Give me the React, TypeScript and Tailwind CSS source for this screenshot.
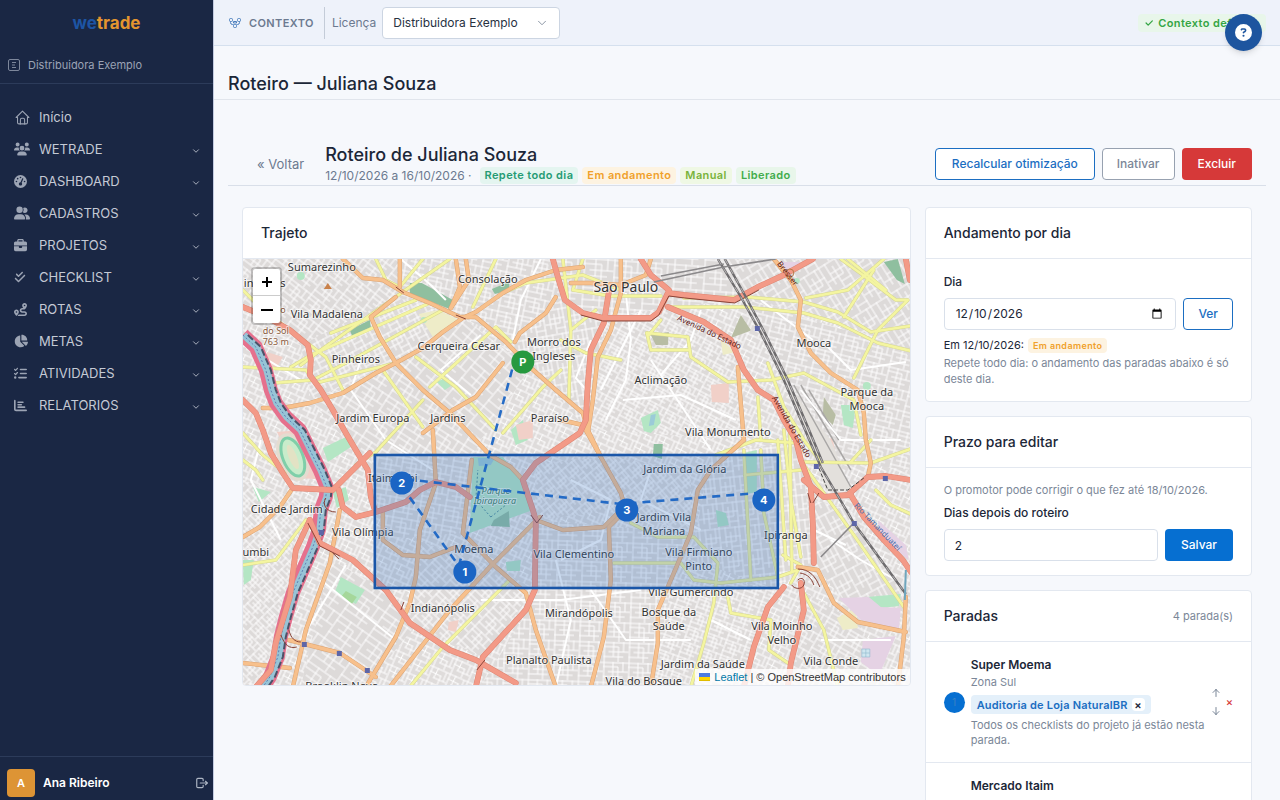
import type { ReactNode } from 'react';
import {
  FaBriefcase,
  FaChartBar,
  FaChartPie,
  FaCheckDouble,
  FaCircleQuestion,
  FaGaugeHigh,
  FaListCheck,
  FaRoute,
  FaUserGroup,
  FaUsers,
} from 'react-icons/fa6';
import { TbArrowDown, TbArrowUp, TbCheck, TbChevronDown, TbHome, TbLogout } from 'react-icons/tb';

const menu = [
  { label: 'WETRADE', icon: <FaUsers size={16} /> },
  { label: 'DASHBOARD', icon: <FaGaugeHigh size={13} /> },
  { label: 'CADASTROS', icon: <FaUserGroup size={16} /> },
  { label: 'PROJETOS', icon: <FaBriefcase size={13} /> },
  { label: 'CHECKLIST', icon: <FaCheckDouble size={12} /> },
  { label: 'ROTAS', icon: <FaRoute size={13} /> },
  { label: 'METAS', icon: <FaChartPie size={14} /> },
  { label: 'ATIVIDADES', icon: <FaListCheck size={13} /> },
  { label: 'RELATORIOS', icon: <FaChartBar size={13} /> },
];

function Sidebar() {
  return (
    <aside className="sticky top-0 flex h-screen w-[213px] shrink-0 flex-col bg-[#1a2744] text-[#c5cad5]">
      <div className="flex h-[46px] items-center justify-center text-[17px] leading-6 font-bold">
        <span className="text-[#1d55a4]">we</span>
        <span className="text-[#e4952f]">trade</span>
      </div>
      <div className="flex h-[38px] items-center gap-2 border-b border-[#2c3b5a] pl-2 text-[11px] text-[#9aa3b5]">
        <svg width="12" height="12" viewBox="0 0 12 12" fill="none" stroke="#7d879b" aria-hidden="true">
          <rect x="0.5" y="0.5" width="11" height="11" rx="1.5" />
          <path d="M4 3.5h4M4 6h3M4 8.5h4" />
        </svg>
        <span>Distribuidora Exemplo</span>
      </div>
      <nav className="flex flex-1 flex-col pt-[17px] text-[13px]">
        <a href="#inicio" className="flex h-8 items-center gap-2 pl-[14px]">
          <span className="flex w-[17px] justify-center text-[#9ca4b4]">
            <TbHome size={17} strokeWidth={1.5} />
          </span>
          Início
        </a>
        {menu.map((m) => (
          <button key={m.label} type="button" className="flex h-8 items-center gap-2 pr-3 pl-[14px] text-left">
            <span className="flex w-[17px] text-[#9ca4b4]">{m.icon}</span>
            <span className="flex-1">{m.label}</span>
            <TbChevronDown size={10} strokeWidth={2} className="mt-[3px]" />
          </button>
        ))}
      </nav>
      <div className="flex h-[44px] items-center gap-2 border-t border-[#2c3b5a] pt-2 pr-1 pl-[7px]">
        <span className="flex size-7 items-center justify-center rounded bg-[#dd9435] text-[11px] font-semibold text-white">A</span>
        <span className="flex-1 text-xs font-semibold text-white">Ana Ribeiro</span>
        <button type="button" aria-label="Sair" className="text-[#aeb6c4]">
          <TbLogout size={14} />
        </button>
      </div>
    </aside>
  );
}

/* ---------- Map ---------- */

const districts = [
  { angle: 38, gap: 5, points: '242,259 400,259 395,300 300,345 242,310' },
  { angle: 62, gap: 5, points: '300,345 395,297 462,318 395,363 310,400' },
  { angle: 40, gap: 7, points: '395,363 462,318 530,368 480,440 422,390' },
  { angle: 12, gap: 5, points: '400,259 552,259 560,300 510,340 462,318 395,297' },
  { angle: 4, gap: 6, points: '552,259 720,259 745,300 667,307 603,318 560,300' },
  { angle: 58, gap: 6, points: '720,259 910,259 910,350 800,310 745,300' },
  { angle: 80, gap: 5, points: '510,340 560,300 605,318 587,430 530,368' },
  { angle: 28, gap: 4, points: '605,318 667,307 735,350 745,440 590,430' },
  { angle: 14, gap: 5, points: '745,300 910,350 910,470 830,460 783,380' },
  { angle: 33, gap: 6, points: '310,400 395,363 480,440 470,460 370,470' },
  { angle: 10, gap: 5, points: '370,455 470,457 462,533 382,540' },
  { angle: 45, gap: 4, points: '242,480 300,500 295,560 270,670 242,686' },
  { angle: 35, gap: 7, points: '330,560 385,590 415,625 365,686 300,686' },
  { angle: 44, gap: 5, points: '415,540 495,567 534,590 482,657 409,623' },
  { angle: 2, gap: 5, points: '534,520 690,533 673,573 650,686 480,686 534,600' },
  { angle: 50, gap: 4, points: '535,463 610,457 690,470 690,533 620,510 534,520' },
  { angle: 84, gap: 5, points: '710,455 800,440 813,565 775,588 690,560' },
  { angle: 20, gap: 4, points: '673,573 775,588 745,686 650,686' },
  { angle: 62, gap: 6, points: '813,500 850,510 905,600 860,620 813,565' },
  { angle: 30, gap: 5, points: '800,590 860,625 890,686 787,686' },
];

const red = [
  '242,307 262,315 289,330 307,345 310,360 309,375 320,390 332,410 345,433 355,450 367,470 370,497 374,510',
  '242,400 255,413 262,430 270,453 282,473 292,488 332,490 355,467 369,453',
  '338,490 342,507 355,517 375,512 405,502 419,490 435,482 455,487 469,497',
  '552,259 557,277 564,300 582,313 603,318 650,318 658,312 667,293 683,295 733,300 757,287 783,275 812,259',
  '608,292 603,323 590,350 587,383 585,420 579,433 535,463 522,480 532,510 535,520 534,590 525,610 482,657 475,687',
  '667,307 703,322 730,340 743,370 757,390 773,400 783,420 795,440 800,460 810,487 812,523 813,563',
  '803,480 823,497 847,495 867,477 885,476 910,480',
  '850,495 863,517 883,540 902,560 910,572',
  '783,587 767,607 753,647 743,687',
  '800,583 803,610 790,663 787,687',
  '309,520 319,543 352,560 385,590 409,623 449,650 475,660 515,683',
  '309,520 295,550 289,597 275,643 270,670 255,687',
  '905,259 909,280',
  '640,259 650,275 668,290',
];

const orange = [
  '262,408 282,408 309,403 342,393 375,373 395,363 422,348 442,332 462,318 475,312 502,293 525,280 555,270 582,267',
  '342,259 362,278 382,280 402,292 429,303 459,317 475,317 505,342 529,367 555,390 582,413 587,430 600,457 620,493 625,510 608,527 610,580 603,637 590,687',
  '395,297 370,317 379,337 395,363 422,390 449,413 470,435 489,455 510,467 522,480',
  '399,259 399,287',
  '455,259 459,287 450,308',
  '465,259 468,280 450,308',
  '555,297 545,313 519,333 514,342',
  '502,363 475,397 452,410 422,433',
  '620,259 620,293 610,330 597,357 592,400 587,433',
  '773,259 790,280 800,300 797,327 810,353 830,373 857,390 863,413 865,440 870,463 867,477',
  '242,537 259,527 279,507 292,488',
  '797,567 817,570 833,603 857,622 905,632',
  '905,597 903,637 897,687',
  '432,430 435,483 419,530 415,577 409,603 395,637 365,687',
  '539,517 489,567 449,610 389,687',
  '471,460 462,533 495,567 525,593 535,630 555,687',
  '382,510 382,540 402,555 429,557 455,547',
  '535,520 562,530 603,527 620,510',
  '339,510 329,563 305,630 292,687',
  '242,663 289,668',
  '288,640 339,653 375,677',
  '743,440 710,470 697,490 690,533 673,573 657,610 657,643 650,687',
  '737,367 743,440',
  '560,420 582,425 600,457',
  '650,259 645,275 620,285 590,283 570,283',
];

const yellow = [
  '375,259 385,280 399,287 422,259',
  '449,259 409,287 320,350 300,365',
  '429,303 310,355 290,367',
  '415,300 330,333',
  '242,290 262,310 289,330 325,357 342,390',
  '242,367 305,370 315,383 395,363',
  '272,383 312,380 345,363 442,310',
  '415,357 455,387 495,430',
  '382,370 422,427',
  '429,387 495,327 510,342',
  '502,433 542,387 560,370',
  '562,259 570,330 568,400',
  '472,307 495,259',
  '502,293 525,283 582,275 620,290',
  '582,259 572,290 610,296 660,296',
  '667,307 743,307 803,313 837,323 877,343 915,352',
  '683,298 747,297 803,302 837,312 870,332 915,325',
  '873,270 843,317',
  '883,259 847,290 805,298',
  '840,259 862,275 895,300 907,300 877,330 853,378',
  '847,259 885,290',
  '646,333 687,337 690,357 727,382 770,380 803,373 853,400 860,435',
  '646,333 650,350 688,350',
  '660,320 648,335',
  '767,363 783,407 803,440 820,462',
  '757,397 760,440',
  '743,450 750,580',
  '760,450 763,513 777,577',
  '783,430 790,500 800,557',
  '789,430 791,570',
  '777,440 785,560',
  '803,465 853,535 903,607',
  '803,462 870,463 915,447',
  '613,563 680,563 693,580 720,583 777,577 797,570',
  '630,523 657,537 693,537 717,563 713,603 703,643 690,687',
  '727,597 730,613 770,620 768,650 790,665',
  '803,593 823,630 837,687',
  '509,580 442,647 409,687',
  '242,433 262,455 284,473',
  '422,400 375,452 355,465',
  '242,460 255,470 262,480',
  '242,565 275,560 305,520',
  '744,475 800,470',
  '782,555 800,565 790,583',
  '870,440 850,462',
  '875,490 890,505 912,515',
  '560,340 585,353 620,360',
  '570,330 595,310',
  '715,455 755,440 795,443',
];

const minor = [
  '242,345 300,380',
  '540,259 520,300 512,340',
  '625,293 630,340 625,380 605,420',
  '640,310 600,390',
  '590,340 575,378 590,395',
  '622,400 680,395 735,420',
  '650,360 690,420 710,450',
  '700,310 690,340 660,375',
  '800,390 840,440 900,440',
  '825,345 850,370 905,362',
  '760,300 812,340',
  '400,259 430,285 445,300',
  '480,335 440,370 470,395',
  '360,360 350,390 385,440 432,470',
  '260,440 250,480 280,540',
  '320,580 395,640',
  '345,565 300,640',
  '555,560 570,620 555,687',
  '590,590 625,640 690,640',
  '570,480 610,500 600,540 560,560',
  '650,470 640,500 700,530',
  '480,600 560,600 640,590',
  '830,540 860,560 895,580',
  '813,530 845,545',
  '820,640 890,640',
  '710,620 750,640',
];

const rail = ['717,259 740,297 760,333 783,380 803,427 820,467 853,523 905,594', '724,259 745,297 764,333 787,380 807,427 822,463'];
const river = '242,335 255,347 265,370 270,390 275,403 285,417 299,430 309,450 319,470 326,487 325,497 320,510 318,530 312,547 302,570 292,593 285,617 280,637 277,657 269,677 260,690';

const labels: { x: number; y: number; t: string; big?: boolean }[] = [
  { x: 321, y: 271, t: 'Sumarezinho' },
  { x: 487, y: 283, t: 'Consolação' },
  { x: 625, y: 292, t: 'São Paulo', big: true },
  { x: 326, y: 318, t: 'Vila Madalena' },
  { x: 458, y: 350, t: 'Cerqueira César' },
  { x: 553, y: 346, t: 'Morro dos' },
  { x: 553, y: 360, t: 'Ingleses' },
  { x: 355, y: 363, t: 'Pinheiros' },
  { x: 813, y: 347, t: 'Mooca' },
  { x: 660, y: 384, t: 'Aclimação' },
  { x: 866, y: 396, t: 'Parque da' },
  { x: 866, y: 410, t: 'Mooca' },
  { x: 372, y: 422, t: 'Jardim Europa' },
  { x: 447, y: 422, t: 'Jardins' },
  { x: 549, y: 422, t: 'Paraíso' },
  { x: 727, y: 436, t: 'Vila Monumento' },
  { x: 684, y: 473, t: 'Jardim da Glória' },
  { x: 392, y: 482, t: 'Itaim Bibi' },
  { x: 286, y: 513, t: 'Cidade Jardim' },
  { x: 362, y: 536, t: 'Vila Olímpia' },
  { x: 663, y: 521, t: 'Jardim Vila' },
  { x: 663, y: 535, t: 'Mariana' },
  { x: 785, y: 539, t: 'Ipiranga' },
  { x: 255, y: 556, t: 'umbi' },
  { x: 473, y: 553, t: 'Moema' },
  { x: 573, y: 558, t: 'Vila Clementino' },
  { x: 698, y: 556, t: 'Vila Firmiano' },
  { x: 698, y: 570, t: 'Pinto' },
  { x: 690, y: 596, t: 'Vila Gumercindo' },
  { x: 442, y: 612, t: 'Indianópolis' },
  { x: 578, y: 617, t: 'Mirandópolis' },
  { x: 668, y: 616, t: 'Bosque da' },
  { x: 668, y: 630, t: 'Saúde' },
  { x: 781, y: 630, t: 'Vila Moinho' },
  { x: 781, y: 644, t: 'Velho' },
  { x: 548, y: 664, t: 'Planalto Paulista' },
  { x: 702, y: 668, t: 'Jardim da Saúde' },
  { x: 830, y: 665, t: 'Vila Conde' },
  { x: 643, y: 685, t: 'Vila do Bosque' },
  { x: 341, y: 690, t: 'Brooklin Novo' },
];

const stops = [
  { x: 522, y: 362, t: 'P', color: '#27993f' },
  { x: 464, y: 572, t: '1', color: '#1b65c4' },
  { x: 401, y: 483, t: '2', color: '#1b65c4' },
  { x: 626, y: 510, t: '3', color: '#1b65c4' },
  { x: 763, y: 500, t: '4', color: '#1b65c4' },
];

function Roads({ lines, casing, color, width }: { lines: string[]; casing: string; color: string; width: number }) {
  return (
    <g fill="none" strokeLinejoin="round" strokeLinecap="round">
      {lines.map((p) => (
        <polyline key={p} points={p} stroke={casing} strokeWidth={width + 1} />
      ))}
      {lines.map((p) => (
        <polyline key={p} points={p} stroke={color} strokeWidth={width} />
      ))}
    </g>
  );
}

function RouteMap() {
  return (
    <svg
      viewBox="242 259 667 426"
      preserveAspectRatio="xMidYMid slice"
      className="block h-[426px] w-full"
      role="img"
      aria-label="Trajeto"
      fontFamily="'Noto Sans', sans-serif"
    >
      <defs>
        {districts.map((d, i) => (
          <pattern
            key={d.points}
            id={`streets-${i}`}
            width={d.gap * 5}
            height={d.gap * 4}
            patternUnits="userSpaceOnUse"
            patternTransform={`rotate(${d.angle})`}
          >
            <rect width={d.gap * 5} height={d.gap * 4} fill="#dddad9" />
            <path
              d={`M0 1H${d.gap * 5}M0 ${d.gap}H${d.gap * 3}M${d.gap} ${d.gap * 2}H${d.gap * 5}M0 ${d.gap * 3}H${d.gap * 4}M1 0V${d.gap * 4}M${d.gap * 2} 0V${d.gap * 3}M${d.gap * 3} ${d.gap}V${d.gap * 4}M${d.gap * 4} 0V${d.gap * 2}`}
              stroke="#fff"
              strokeWidth="1"
              fill="none"
            />
          </pattern>
        ))}
        <pattern id="streets-base" width="19" height="16" patternUnits="userSpaceOnUse" patternTransform="rotate(24)">
          <rect width="19" height="16" fill="#dfdcdb" />
          <path d="M0 1H19M0 6L12 7M5 11H19M1 0V16M7 0L6 11M12 6V16M16 1V11" stroke="#fff" strokeWidth="1" fill="none" />
        </pattern>
      </defs>

      <rect x="240" y="255" width="675" height="435" fill="url(#streets-base)" />
      {districts.map((d, i) => (
        <polygon key={d.points} points={d.points} fill={`url(#streets-${i})`} />
      ))}

      {/* land use */}
      <g fill="#8fbf9f">
        <path d="M409 283L421 283L452 300L449 309L409 294Z" />
        <path d="M349 330L369 320L370 327L352 338Z" />
        <path d="M491 289L508 282L509 290L494 294Z" />
        <path d="M883 262L897 259L904 284L896 280Z" />
        <path d="M653 444L662 444L661 459L652 456Z" />
      </g>
      <g fill="#eeecc8">
        <path d="M418 314L438 310L458 320L432 337Z" />
        <path d="M720 340L735 352L722 355Z" />
        <path d="M836 618L855 608L857 628L842 630Z" />
      </g>
      <g fill="#b8bda4">
        <path d="M740 315L750 330L749 331L730 338Z" />
        <path d="M650 335L668 332L667 345L655 345Z" />
        <path d="M823 397L835 415L832 425L822 415Z" />
      </g>
      <g fill="#b4e6c4">
        <path d="M640 418L657 410L660 423L650 433L643 431Z" />
        <path d="M472 457L502 457L525 487L532 510L469 533Z" />
        <path d="M743 453L756 450L756 492L745 494Z" />
        <path d="M252 487L270 492L258 502Z" />
        <path d="M322 448L345 437L350 447L327 462Z" />
        <path d="M332 492L345 487L348 500L336 508Z" />
        <path d="M340 577L364 590L355 604L334 592Z" />
        <path d="M510 430L522 420L527 440L515 445Z" />
        <path d="M866 597L900 594L898 606L880 608Z" />
        <path d="M242 560L253 560L250 580L243 585Z" />
        <path d="M505 562L520 560L519 571L506 571Z" />
        <path d="M715 510L725 513L728 525L717 527Z" />
        <path d="M436 382L444 378L450 386L444 390Z" />
        <circle cx="300" cy="276" r="4" />
        <circle cx="423" cy="320" r="3" />
        <circle cx="796" cy="281" r="3" />
        <circle cx="866" cy="386" r="4" />
        <path d="M840 405L855 405L852 428L843 425Z" />
      </g>
      <path d="M650 415L655 414L653 425L648 426Z" fill="#9bcbd8" />
      <path d="M477 458L494 458L490 465L478 466Z" fill="#9bcbd8" />
      <path d="M493 520L508 511L509 527L490 526Z" fill="#8fbf9f" />
      <g fill="#f1d0c8">
        <path d="M710 385L728 383L728 403L711 402Z" />
        <path d="M266 352L282 357L275 369L264 364Z" />
        <path d="M515 425L532 420L532 438L518 440Z" />
        <path d="M820 440L832 438L835 458L825 455Z" />
        <path d="M448 622L458 620L455 632L447 630Z" />
        <path d="M276 432L300 430L325 480L300 478Z" />
      </g>
      <g fill="#e5d2e4">
        <path d="M838 598L868 597L880 607L900 608L898 630L860 620Z" />
        <path d="M862 640L895 636L878 676L860 662Z" />
        <path d="M877 520L905 545L908 560L880 538Z" />
        <path d="M780 262L800 262L790 275Z" />
      </g>
      <path d="M787 385L830 440L850 490L825 490L800 420Z" fill="#e3e0dc" />
      <path d="M793 385L850 487M800 385L850 470M808 390L838 440" stroke="#a9a7a6" strokeWidth="1.5" fill="none" />
      <path d="M861 649h8v8h-8zM865 649v8M861 653h8" fill="#cfe6f0" stroke="#8fb9cf" strokeWidth="0.6" />
      <g transform="rotate(-22 292 457)">
        <ellipse cx="292" cy="457" rx="15" ry="25" fill="#e4dcd0" />
        <ellipse cx="292" cy="457" rx="10" ry="20" fill="#c8eccb" stroke="#7fcfa9" strokeWidth="3" />
        <ellipse cx="292" cy="457" rx="4" ry="13" fill="#e2e2c4" />
      </g>
      <path d="M345 591L356 597L351 604L340 597Z" fill="#a5d79a" />

      {/* streets and avenues */}
      <g fill="none" stroke="#fff" strokeWidth="2" strokeLinejoin="round">
        {minor.map((p) => (
          <polyline key={p} points={p} />
        ))}
      </g>
      <Roads lines={yellow} casing="#d6d792" color="#f4f5a0" width={2.5} />
      <Roads lines={orange} casing="#dba272" color="#f7c08c" width={3.4} />

      {/* river and its expressways */}
      <g fill="none" strokeLinejoin="round">
        <polyline points={river} stroke="#e5708d" strokeWidth="14" />
        <polyline points={river} stroke="#97c4d6" strokeWidth="7" transform="translate(1 0)" />
        <polyline points={river} stroke="#4d5268" strokeWidth="2" strokeDasharray="7 3" transform="translate(5 0)" />
        <polyline points={river} stroke="#5f7fb4" strokeWidth="1" strokeDasharray="2 2" />
      </g>
      <Roads lines={red} casing="#dd8674" color="#f39a87" width={4.8} />

      {/* junctions */}
      <g fill="none" stroke="#8a4438" strokeWidth="1">
        <path d="M797 580c4 -4 8 0 6 5s-10 4 -12 0M797 569c12 0 18 8 22 18M799 573c8 1 12 6 14 12" />
        <path d="M807 493l3 10M818 493l-6 10M530 515l6 8M542 515l-6 8" />
        <path d="M395 287l8 6M455 315l10 4M332 553l6 6M476 670l8 -10M400 610l3 -8" />
        <path d="M580 315l22 6l48 0l8 -6l10 -19l16 2l50 5l24 -13M307 523l12 23l20 10" />
        <circle cx="789" cy="273" r="4" stroke="#b67a47" />
        <path d="M288 630c2 8 6 12 12 12M280 635c4 10 8 14 16 12M325 498c-4 6 0 14 10 14" />
      </g>

      {/* railways */}
      <g fill="none">
        {rail.map((p) => (
          <g key={p}>
            <polyline points={p} stroke="#6d6b6d" strokeWidth="2.4" />
            <polyline points={p} stroke="#b9b7b8" strokeWidth="1" strokeDasharray="6 5" />
          </g>
        ))}
        <path d="M653 282L723 267L775 259M660 276L723 264M853 523L820 557" stroke="#8b898b" strokeWidth="1.6" />
        <path d="M818 468L827 490L847 490L863 478" stroke="#444" strokeWidth="1" strokeDasharray="4 2" />
        <polyline points="905,570 904,600" stroke="#6fa6bd" strokeWidth="2" />
        <path d="M490 517L475 500L477 470M490 517L505 505" stroke="#4e8f9a" strokeWidth="1" strokeDasharray="2 2" />
      </g>
      <g fill="#5d66a8">
        {['301,642', '336,651', '364,668', '754,326', '813,464', '882,476', '851,521', '318,530'].map((p) => {
          const [x, y] = p.split(',').map(Number);
          return <rect key={p} x={x} y={y} width="5" height="5" />;
        })}
      </g>
      <path d="M327 283l4 6h-8z" fill="#c9814a" />

      {/* place names */}
      <g textAnchor="middle" fill="#333" stroke="#fff" strokeOpacity="0.6" strokeWidth="2" paintOrder="stroke" strokeLinejoin="round">
        {labels.map((l) => (
          <text key={l.t + l.y} x={l.x} y={l.y} fontSize={l.big ? 14 : 11}>
            {l.t}
          </text>
        ))}
        <text x="243" y="287" fontSize="11" textAnchor="start">inheiros</text>
        <g fill="#8a5a3c" fontSize="9">
          <text x="276" y="313">Pico</text>
          <text x="275" y="334">do Sol</text>
          <text x="275" y="345">763 m</text>
        </g>
        <g fill="#3c7f5c" fontSize="9" fontStyle="italic">
          <text x="495" y="494">Parque</text>
          <text x="494" y="504">Ibirapuera</text>
        </g>
      </g>
      <g fontSize="8" fill="#5e2018">
        <text x="676" y="320" transform="rotate(25 676 320)">Avenida do Estado</text>
        <text x="771" y="398" transform="rotate(60 771 398)">Avenida do Estado</text>
        <text x="776" y="264" transform="rotate(52 776 264)">Bresser</text>
        <text x="853" y="506" fill="#4a6fae" transform="rotate(46 853 506)">Rio Tamanduateí</text>
      </g>

      {/* work area, route and stops */}
      <rect x="374" y="455" width="403" height="133" fill="#3b78c4" fillOpacity="0.27" stroke="#1a56a8" strokeWidth="2.6" />
      <polyline
        points="515,356 458,566 395,478 620,504 757,493"
        fill="none"
        stroke="#1b65c4"
        strokeWidth="2.6"
        strokeDasharray="8 6"
        opacity="0.95"
      />
      {stops.map((s) => (
        <g key={s.t}>
          <circle cx={s.x} cy={s.y} r="11.5" fill={s.color} />
          <text x={s.x} y={s.y + 4} fontSize="11" fontWeight="700" fill="#fff" textAnchor="middle" fontFamily="Inter, sans-serif">
            {s.t}
          </text>
        </g>
      ))}
    </svg>
  );
}

/* ---------- Page parts ---------- */

function Card({ title, extra, children }: { title: string; extra?: ReactNode; children: ReactNode }) {
  return (
    <section className="overflow-hidden rounded border border-[#e3e8f0] bg-white">
      <header className="flex h-[51px] items-center justify-between border-b border-[#e3e8f0] px-[18px]">
        <h3 className="text-sm leading-5 font-medium">{title}</h3>
        {extra}
      </header>
      {children}
    </section>
  );
}

const tones = {
  teal: 'bg-[#e4f5f0] text-[#259b74]',
  amber: 'bg-[#fdf3e1] text-[#f0a12b]',
  lime: 'bg-[#eff8e4] text-[#79b33a]',
  green: 'bg-[#e8f6ea] text-[#41ac4c]',
};

function Badge({ tone, children }: { tone: keyof typeof tones; children: ReactNode }) {
  return <span className={`rounded-sm px-[5px] text-[11px] leading-[17px] font-semibold tracking-[0.4px] ${tones[tone]}`}>{children}</span>;
}

function MapCard() {
  return (
    <Card title="Trajeto">
      <div className="relative">
        <RouteMap />
        <div className="absolute top-2 left-2 flex flex-col overflow-hidden rounded border-2 border-black/20 bg-white bg-clip-padding text-black">
          <button type="button" aria-label="Aproximar" className="flex size-[27px] items-center justify-center border-b border-[#ccc]">
            <svg width="12" height="12" stroke="currentColor" strokeWidth="2" aria-hidden="true">
              <path d="M6 1v10M1 6h10" />
            </svg>
          </button>
          <button type="button" aria-label="Afastar" className="flex size-[27px] items-center justify-center">
            <svg width="12" height="12" stroke="currentColor" strokeWidth="2" aria-hidden="true">
              <path d="M0 6h12" />
            </svg>
          </button>
        </div>
        <div className="absolute right-0 bottom-0 flex items-center gap-1 bg-white/80 px-1 font-['Liberation_Sans',sans-serif] text-[11px] leading-4 text-[#333]">
          <svg width="11" height="8" aria-hidden="true">
            <path fill="#4C7BE1" d="M0 0h11v4H0z" />
            <path fill="#FFD500" d="M0 4h11v3H0z" />
            <path fill="#E0BC00" d="M0 7h11v1H0z" />
          </svg>
          <p>
            <a href="#leaflet" className="text-[#0078a8]">Leaflet</a> | © OpenStreetMap contributors
          </p>
        </div>
      </div>
    </Card>
  );
}

export default function App() {
  return (
    <div className="flex min-h-screen bg-[#f6f8fc] font-['Inter',sans-serif] text-[13px] leading-5 text-[#1c2738]">
      <Sidebar />
      <div className="min-w-0 flex-1 border-l border-[#c3cbe0]">
        <div className="flex h-[46px] items-center border-b border-[#d5e0ee] bg-[#eef2fa] px-[14px]">
          <svg width="14" height="12" viewBox="0 0 14 12" fill="none" stroke="#4c80bf" aria-hidden="true">
            <rect x="1.5" y="1.5" width="3" height="3" rx="1" />
            <rect x="9.5" y="1.5" width="3" height="3" rx="1" />
            <rect x="5.500" y="7.500" width="3" height="3" rx="1" />
            <path d="M2.5 4.5v1a2 2 0 0 0 2 2h1M11.5 4.5v1a2 2 0 0 1 -2 2h-1M5.5 4.500h3v1.500h-3z" />
          </svg>
          <span className="ml-[7px] text-[11px] font-semibold tracking-[0.4px] text-[#6c7a90]">CONTEXTO</span>
          <div className="ml-[10px] h-8 w-px bg-[#c4ccd8]" />
          <label htmlFor="licenca" className="ml-[7px] text-xs text-[#6c7a90]">Licença</label>
          <div className="relative ml-[6px]">
            <select
              id="licenca"
              className="h-8 w-[178px] appearance-none rounded border border-[#ccd5e2] bg-white pl-[10px] text-xs text-[#27313f]"
            >
              <option>Distribuidora Exemplo</option>
            </select>
            <TbChevronDown size={14} strokeWidth={1.5} className="pointer-events-none absolute top-[9px] right-[11px] text-[#7b8798]" />
          </div>
          <span className="ml-auto flex items-center gap-1 rounded-sm bg-[#e8f6ea] px-[6px] text-[11px] leading-[18px] font-semibold tracking-[0.4px] text-[#34a544]">
            <TbCheck size={10} strokeWidth={3} />
            Contexto definido
          </span>
        </div>

        <div className="flex h-[54px] items-end border-b border-[#e1e5ec] px-[14px]">
          <h1 className="pb-[3px] text-lg leading-6 font-medium">Roteiro — Juliana Souza</h1>
        </div>

        <main className="px-[14px] pt-[42px] pb-6">
          <div className="flex h-[44px] items-center border-b border-[#d9dfe9] pr-[14px] pl-[29px]">
            <a href="#voltar" className="text-[#6c7a90]">« Voltar</a>
            <div className="ml-[21px]">
              <h2 className="text-lg leading-6 font-medium">Roteiro de Juliana Souza</h2>
              <p className="flex items-center gap-1 text-xs leading-[18px] text-[#6c7a90]">
                <span className="mr-1">12/10/2026 a 16/10/2026 ·</span>
                <Badge tone="teal">Repete todo dia</Badge>
                <Badge tone="amber">Em andamento</Badge>
                <Badge tone="lime">Manual</Badge>
                <Badge tone="green">Liberado</Badge>
              </p>
            </div>
            <div className="ml-auto flex gap-[7px] text-xs font-medium">
              <button type="button" className="h-8 rounded border border-[#1b6ec2] bg-white px-4 text-[#1b6ec2]">
                Recalcular otimização
              </button>
              <button type="button" className="h-8 rounded border border-[#97a1b0] bg-white px-[14px] text-[#7c8798]">
                Inativar
              </button>
              <button type="button" className="h-8 rounded bg-[#d63939] px-4 text-white">
                Excluir
              </button>
            </div>
          </div>

          <div className="mt-[21px] grid grid-cols-3 items-start gap-[14px] px-[14px]">
            <div className="col-span-2">
              <MapCard />
            </div>
            <div className="flex flex-col gap-[14px]">
              <Card title="Andamento por dia">
                <div className="px-[18px] pt-[13px] pb-[14px]">
                  <label htmlFor="dia" className="block text-xs leading-5 font-medium">Dia</label>
                  <div className="mt-[6px] flex gap-[7px]">
                    <input
                      id="dia"
                      type="date"
                      defaultValue="2026-12-10"
                      className="h-8 min-w-0 flex-1 rounded border border-[#d9e0ea] bg-white px-[10px] text-xs"
                    />
                    <button type="button" className="h-8 rounded border border-[#1b6ec2] bg-white px-[14px] text-xs font-medium text-[#1b6ec2]">
                      Ver
                    </button>
                  </div>
                  <p className="mt-[6px] flex items-center gap-1 text-[11px] leading-[19px]">
                    Em 12/10/2026:
                    <span className="rounded-sm bg-[#fdf3e1] px-[5px] text-[9px] leading-[15px] font-semibold tracking-[0.4px] text-[#f0a12b]">
                      Em andamento
                    </span>
                  </p>
                  <p className="text-[11px] leading-4 text-[#7b8798]">
                    Repete todo dia: o andamento das paradas abaixo é só deste dia.
                  </p>
                </div>
              </Card>

              <Card title="Prazo para editar">
                <div className="px-[18px] pt-[14px] pb-[14px]">
                  <p className="text-[11px] leading-4 text-[#7b8798]">O promotor pode corrigir o que fez até 18/10/2026.</p>
                  <label htmlFor="dias" className="mt-[5px] block text-xs leading-5 font-medium">Dias depois do roteiro</label>
                  <div className="mt-[6px] flex gap-[7px]">
                    <input
                      id="dias"
                      type="text"
                      defaultValue="2"
                      className="h-8 min-w-0 flex-1 rounded border border-[#d9e0ea] bg-white px-[10px] text-xs"
                    />
                    <button type="button" className="h-8 rounded bg-[#066fd1] px-4 text-xs font-medium text-white">
                      Salvar
                    </button>
                  </div>
                </div>
              </Card>

              <Card title="Paradas" extra={<span className="text-[11px] text-[#7b8798]">4 parada(s)</span>}>
                <ul>
                  <li className="flex items-center border-b border-[#e3e8f0] pt-[14px] pr-[18px] pb-[14px] pl-[18px]">
                    <span className="flex size-[21px] shrink-0 items-center justify-center rounded-full bg-[#066fd1] text-[10px] leading-4 text-[#3c82c4]">
                      1
                    </span>
                    <div className="ml-[6px] min-w-0 flex-1">
                      <p className="text-xs leading-[18px] font-semibold">Super Moema</p>
                      <p className="text-[11px] leading-4 text-[#7b8798]">Zona Sul</p>
                      <p className="mt-[5px] inline-flex h-[19px] items-center gap-1 rounded-sm bg-[#e4f0fa] px-[6px] text-[11px] font-semibold tracking-[0.2px] text-[#1b6ec2]">
                        Auditoria de Loja NaturalBR
                        <button type="button" aria-label="Remover checklist" className="size-[13px] rounded-sm bg-white text-[11px] leading-[12px] text-[#1c2738]">
                          ×
                        </button>
                      </p>
                      <p className="mt-1 text-[11px] leading-[15px] text-[#7b8798]">Todos os checklists do projeto já estão nesta parada.</p>
                    </div>
                    <div className="flex flex-col gap-[6px] text-[#7b8798]">
                      <button type="button" aria-label="Subir"><TbArrowUp size={12} /></button>
                      <button type="button" aria-label="Descer"><TbArrowDown size={12} /></button>
                    </div>
                    <button type="button" aria-label="Excluir parada" className="ml-1 text-[11px] leading-4 font-medium text-[#d63939]">×</button>
                  </li>
                  <li className="py-[14px] pr-[18px] pl-[45px]">
                    <p className="text-xs leading-[18px] font-semibold">Mercado Itaim</p>
                  </li>
                </ul>
              </Card>
            </div>
          </div>
        </main>
      </div>
      <button
        type="button"
        aria-label="Ajuda"
        className="fixed top-[14px] right-[18px] flex size-[37px] items-center justify-center rounded-full bg-[#1d559f] text-white shadow-md"
      >
        <FaCircleQuestion size={17} />
      </button>
    </div>
  );
}
